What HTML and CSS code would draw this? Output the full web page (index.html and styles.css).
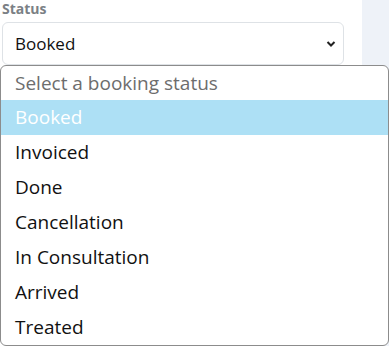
FILE: index.html
```html
<!DOCTYPE html>
<html lang="en">
<head>
  <meta charset="UTF-8">
  <meta name="viewport" content="width=device-width, initial-scale=1.0">
  <title>Booking Status</title>
  <link rel="stylesheet" href="styles.css">
</head>
<body>
  <div class="page">
    <div class="form">
      <label class="label" for="status">Status</label>
      <div class="select" id="status">
        <span>Booked</span>
        <svg class="chevron" width="10" height="8" viewBox="0 0 10 8">
          <path d="M1.5 2 L5 5.5 L8.5 2" fill="none" stroke="#222" stroke-width="2"/>
        </svg>
      </div>
    </div>
    <div class="side"></div>
  </div>

  <!-- open dropdown list -->
  <ul class="listbox">
    <li class="placeholder">Select a booking status</li>
    <li class="selected">Booked</li>
    <li>Invoiced</li>
    <li>Done</li>
    <li>Cancellation</li>
    <li>In Consultation</li>
    <li>Arrived</li>
    <li>Treated</li>
  </ul>
</body>
</html>
```

FILE: styles.css
```css
body {
  margin: 0;
  font-family: "Open Sans", "Noto Sans", Arial, sans-serif;
  background: #fff;
}
.page {
  display: flex;
  height: 346px;
}
.form {
  width: 362px;
  padding: 1px 18px 0 2px;
  box-sizing: border-box;
}
.label {
  display: block;
  font-size: 14px;
  font-weight: 700;
  color: #7b8085;
  line-height: 16px;
  margin-bottom: 5px;
}
.select {
  display: flex;
  align-items: center;
  justify-content: space-between;
  height: 43px;
  box-sizing: border-box;
  padding: 0 7px 0 12px;
  border: 1px solid #dee2e6;
  border-radius: 6px;
  font-size: 17px;
  color: #111;
}
.side {
  flex: 1;
  background: #eef2f8;
}
.listbox {
  position: absolute;
  top: 65px;
  left: 0;
  width: 389px;
  box-sizing: border-box;
  margin: 0;
  padding: 0;
  list-style: none;
  background: #fff;
  border: 1px solid #8c8c8c;
  border-radius: 6px;
  font-size: 19px;
  color: #111;
}
.listbox li {
  height: 35px;
  line-height: 35px;
  padding-left: 14px;
}
.listbox .placeholder {
  height: 34px;
  line-height: 34px;
  color: #6d6d6d;
}
.listbox .selected {
  background: #ade0f5;
  color: #fff;
}
```
